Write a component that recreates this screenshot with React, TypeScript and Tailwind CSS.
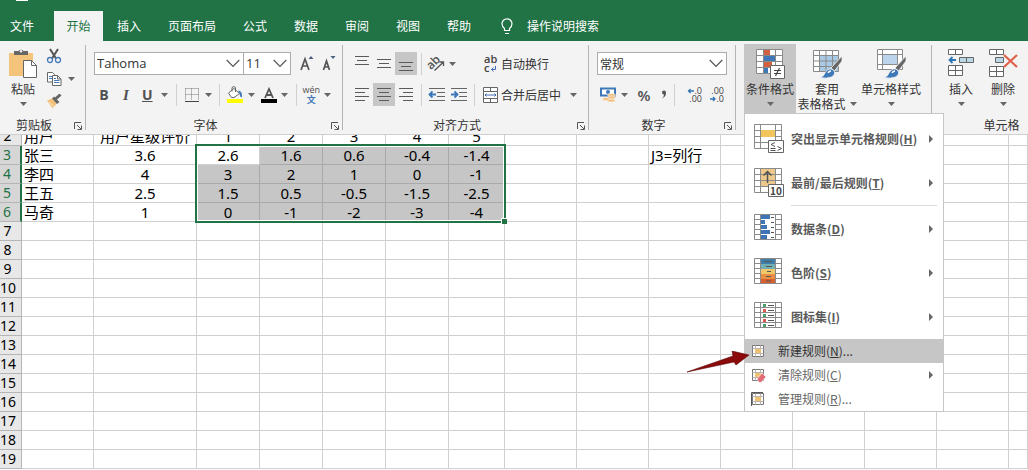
import type { ReactNode } from 'react';

const tabs = ['插入', '页面布局', '公式', '数据', '审阅', '视图', '帮助'];

const sheet: Record<number, string[]> = {
  2: ['用户', '用户星级评价', '1', '2', '3', '4', '5'],
  3: ['张三', '3.6', '2.6', '1.6', '0.6', '-0.4', '-1.4', '', '', 'J3=列行'],
  4: ['李四', '4', '3', '2', '1', '0', '-1'],
  5: ['王五', '2.5', '1.5', '0.5', '-0.5', '-1.5', '-2.5'],
  6: ['马奇', '1', '0', '-1', '-2', '-3', '-4'],
};

const rowNumbers = Array.from({ length: 18 }, (_, i) => i + 2);
const columns = [
  'w-[72px]', 'w-[103px]', 'w-[63px]', 'w-[63px]', 'w-[63px]', 'w-[63px]', 'w-[56px]',
  'w-[72px]', 'w-[72px]', 'w-[72px]', 'w-[72px]', 'w-[72px]', 'w-[72px]', 'w-[72px]', 'w-auto',
];

function Caret() {
  return (
    <svg width="7" height="4" viewBox="0 0 7 4" className="shrink-0" aria-hidden="true">
      <path d="M0 0h7L3.500 4z" fill="#666" />
    </svg>
  );
}

function Chevron() {
  return (
    <svg width="14" height="9" viewBox="0 0 14 9" className="pointer-events-none shrink-0" aria-hidden="true">
      <path d="M.7 1 7 7.500 13.300 1" fill="none" stroke="#555" strokeWidth="1.200" />
    </svg>
  );
}

function Launcher({ label }: { label: string }) {
  return (
    <button aria-label={label} className="mr-[3px] shrink-0">
      <svg width="8" height="8" viewBox="0 0 8 8" className="mt-px">
        <path d="M.5 7V.5H7M3 3l4 4M7.500 3.500v4h-4" fill="none" stroke="#555" />
      </svg>
    </button>
  );
}

function Divider() {
  return <div className="h-[22px] w-px shrink-0 bg-[#d0d0d0]" />;
}

function Tool({ label, className, children }: { label: string; className: string; children: ReactNode }) {
  return (
    <button aria-label={label} className={`flex h-[23px] shrink-0 items-center justify-center ${className}`}>
      {children}
    </button>
  );
}

function Group({ title, className, launcher, children }: { title?: string; className: string; launcher?: boolean; children: ReactNode }) {
  return (
    <section className={`flex shrink-0 ${className}`}>
      <div className="flex min-w-0 flex-1 flex-col pt-[3px]">
        <div className="h-[72px]">{children}</div>
        <div className="flex h-[18px] items-center">
          <span className={`flex-1 text-center leading-[18px] ${launcher ? 'pr-1.5' : ''}`}>{title}</span>
          {launcher && <Launcher label={`${title}设置`} />}
        </div>
      </div>
      <div className="my-1 w-px bg-[#b4b4b4]" />
    </section>
  );
}

function Lines({ rows }: { rows: [number, number, number][] }) {
  return (
    <svg width="14" height="17" viewBox="0 0 14 17" stroke="#5a5a5a">
      {rows.map(([x, y, w]) => <path key={y} d={`M${x} ${y}.5h${w}`} />)}
    </svg>
  );
}

function PasteIcon() {
  return (
    <svg width="30" height="31" viewBox="0 0 30 31">
      <path d="M1 5h24v23H1z" fill="#f5c47c" />
      <path d="M6 7V3h4.500a3 3 0 0 1 5 0H20v4z" fill="#666" />
      <circle cx="13" cy="3.200" r="1.200" fill="#f3f3f3" />
      <path d="M15.500 12.500h8l5 5v12h-13z" fill="#fff" stroke="#666" />
      <path d="M23.500 12.500v5h5" fill="none" stroke="#666" />
    </svg>
  );
}

function ScissorsIcon() {
  return (
    <svg width="16" height="16" viewBox="0 0 16 16" fill="none">
      <path d="m4 1 6 9.500M12 1 6 10.500" stroke="#555" strokeWidth="2" />
      <circle cx="4" cy="12" r="2.500" stroke="#4679b8" strokeWidth="1.300" />
      <circle cx="12" cy="12" r="2.500" stroke="#4679b8" strokeWidth="1.300" />
    </svg>
  );
}

function CopyIcon() {
  return (
    <svg width="16" height="16" viewBox="0 0 16 16" stroke="#666">
      <path d="M1.500 1.500h5l2 2v7.500h-7z" fill="#fff" />
      <path d="M3 5.500h3M3 7.500h3" stroke="#4679b8" />
      <path d="M6.500 4.500h5l3.500 3.500v6.500H6.500z" fill="#fff" />
      <path d="M11.500 4.500V8H15" fill="none" />
      <path d="M8 7.500h2M8 9.500h5.500M8 11.500h5.500" stroke="#4679b8" />
    </svg>
  );
}

function PainterIcon() {
  return (
    <svg width="16" height="15" viewBox="0 0 16 15">
      <path d="M1 6.500 6 4.500l5 5-4.500 5z" fill="#f2c078" />
      <path d="m6 4.500 2-2 5.500 5.500-2.500 2z" fill="#666" />
      <path d="m9.500 5 5-4.500" stroke="#666" strokeWidth="3" />
      <path d="m3 8 5.500 5" stroke="#fff" strokeWidth=".6" />
    </svg>
  );
}

function BucketIcon() {
  return (
    <svg width="18" height="17" viewBox="0 0 18 17">
      <path d="m2.500 7 5.500-4.500 5.500 5L8 11.500H5.500z" fill="#fff" stroke="#666" />
      <path d="M6 5.500V2a1.800 1.800 0 0 1 3.500 0v4" fill="none" stroke="#666" />
      <path d="M12 4.500q4.500 0 4 6.500-2 1-2.500-3.500z" fill="#4679b8" />
      <path d="M1 13h16v4H1z" fill="#ff0" />
    </svg>
  );
}

function OrientationIcon() {
  return (
    <svg width="17" height="17" viewBox="0 0 17 17" className="overflow-visible">
      <text x="-1" y="12" transform="rotate(-45 5 9)" fontSize="12" fontWeight="600" fill="#555" className="font-['Open_Sans',sans-serif]">ab</text>
      <path d="m6.500 15.500 8.500-8M11.500 7h4v4" fill="none" stroke="#555" strokeWidth="1.300" />
    </svg>
  );
}

function IndentIcon({ right }: { right?: boolean }) {
  return (
    <svg width="18" height="15" viewBox="0 0 18 15" fill="none">
      <path d="M1 1.500h16M9 5.500h8M9 9.500h8M1 13.500h16" stroke="#666" />
      <path d={right ? 'M1 7.500h6M4.500 4.500l3 3-3 3' : 'M8 7.500H2M4.500 4.500l-3 3 3 3'} stroke="#3a76b8" strokeWidth="1.800" />
    </svg>
  );
}

function WrapIcon() {
  return (
    <svg width="15" height="18" viewBox="0 0 15 18" className="overflow-visible font-['Open_Sans',sans-serif]" fill="#444" fontWeight="600">
      <text x="1" y="8" fontSize="11">ab</text>
      <text x="1" y="17" fontSize="11">c</text>
      <path d="M12.500 11v3.500H8.500M10.500 12.500l-2 2 2 2" fill="none" stroke="#3f68b0" />
    </svg>
  );
}

function MergeIcon() {
  return (
    <svg width="15" height="16" viewBox="0 0 15 16" fill="none">
      <path d="M.5.500h14v15H.5z" fill="#fff" stroke="#666" />
      <path d="M.5 4.500h14M.5 11.500h14M7.500.500v4M7.500 11.500v4" stroke="#666" />
      <path d="M2 8h4M9 8h4M3.500 6.500 2 8l1.500 1.500M11.500 6.500 13 8l-1.500 1.500M6 8h3" stroke="#3f68b0" />
    </svg>
  );
}

function CurrencyIcon() {
  return (
    <svg width="18" height="17" viewBox="0 0 18 17">
      <path d="M2 2.500h14v7H2z" fill="#fff" stroke="#3f78b8" strokeWidth="2" />
      <circle cx="9" cy="6" r="2" fill="#3f78b8" />
      <g fill="#f5c07c" stroke="#f3f3f3" strokeWidth=".6">
        <ellipse cx="12.500" cy="9" rx="4" ry="1.600" />
        <ellipse cx="12.500" cy="11.500" rx="4" ry="1.600" />
        <ellipse cx="12" cy="14.500" rx="4" ry="1.600" />
        <ellipse cx="7" cy="13" rx="3.500" ry="1.500" />
      </g>
    </svg>
  );
}

function DecimalIcon({ less }: { less?: boolean }) {
  return (
    <svg width="16" height="16" viewBox="0 0 16 16" className="overflow-visible font-['Open_Sans',sans-serif]" fill="#444" fontSize="9" textAnchor="end">
      <text x="15" y="7">{less ? '.00' : '.0'}</text>
      <text x="15" y="15">{less ? '.0' : '.00'}</text>
      <path d={less ? 'M1 12h5M4 10l2 2-2 2' : 'M7 4H1.500M3.500 2l-2 2 2 2'} fill="none" stroke="#2f75b5" strokeWidth="1.300" />
    </svg>
  );
}

function ConditionalIcon() {
  return (
    <svg width="30" height="31" viewBox="0 0 30 31">
      <path d="M1.500 1.500h26v24h-26z" fill="#fff" />
      <path d="M9 1.500h6v6H9z" fill="#d2613f" />
      <path d="M9 8h11v5H9z" fill="#3f78b8" />
      <path d="M9 14h8v5H9z" fill="#d2613f" />
      <path d="M9 20h4v5.500H9z" fill="#3f78b8" />
      <path d="M1.500 1.500h26v24h-26zM1.500 7.500h26M1.500 13.500h26M1.500 19.500h26M8.500 1.500v24M20.500 1.500v24" fill="none" stroke="#8a8a8a" />
      <path d="M15.500 17.500h14v13h-14z" fill="#fff" stroke="#666" />
      <path d="M19 22.500h7M19 25.500h7M24.500 20l-4 8" stroke="#444" strokeWidth="1.200" />
    </svg>
  );
}

function BrushTableIcon({ plain }: { plain?: boolean }) {
  return (
    <svg width="31" height="31" viewBox="0 0 31 31">
      <path d={plain ? 'M1.500 1.500h25v20h-25z' : 'M1.500 2.500h25v21h-25z'} fill="#fff" />
      <path d={plain ? 'M7 6.500h14v10H7z' : 'M7.500 8h19v15.500h-19z'} fill={plain ? '#bcd4ec' : '#a9c9e4'} />
      <path
        d={plain
          ? 'M1.500 1.500h25v20h-25zM1.500 6.500h25M1.500 16.500h25M6.500 1.500v20M21.500 1.500v20'
          : 'M1.500 2.500h25v21h-25zM1.500 7.500h25M1.500 13h25M1.500 18.500h25M7.500 2.500v21M14 2.500v21M20.500 2.500v21'}
        fill="none"
        stroke="#8a8a8a"
      />
      <path d="M30 8 19 20l3.500 3L30 13z" fill="#666" stroke="#f3f3f3" strokeWidth=".8" />
      <path d="M8 29.500q4-1 5.500-5.500 3.500-5 8-2 3 4-2 7-5 2-11.500.500z" fill="#3f78b8" stroke="#f3f3f3" strokeWidth=".8" />
      <path d="M16 25q1-2 3-2" stroke="#fff" strokeWidth="1.500" fill="none" />
    </svg>
  );
}

function InsertCellIcon() {
  return (
    <svg width="28" height="31" viewBox="0 0 28 31" stroke="#666">
      <path d="M1.500 1.500h14v5h-14zM8.500 1.500v5M1.500 17.500h14v10h-14zM8.500 17.500v10M1.500 22.500h14" fill="#fff" />
      <path d="M12.500 9.500h14v5h-14zM19.500 9.500v5" fill="#bcd8e6" />
      <path d="M9 12H3M5.500 9 2.500 12l3 3" fill="none" stroke="#2f75b5" strokeWidth="1.800" />
    </svg>
  );
}

function DeleteCellIcon() {
  return (
    <svg width="30" height="31" viewBox="0 0 30 31" stroke="#666">
      <path d="M1.500 1.500h14v5h-14zM8.500 1.500v5M1.500 18.500h14v10h-14zM8.500 18.500v10M1.500 23.500h14" fill="#fff" />
      <path d="M7.500 9.500h8v5h-8z" fill="#bcd8e6" />
      <path d="m16 7 13 12M29 7 16 19" stroke="#e0604a" strokeWidth="2.200" />
    </svg>
  );
}

// 28px table glyphs used by the large menu entries
function RuleIcon({ kind }: { kind: string }) {
  return (
    <svg width="30" height="30" viewBox="0 0 30 30" className="shrink-0">
      <path d="M.5.500h27v25H.5z" fill="#fff" />
      {kind === 'top' && <path d="M7 1h14v18H7z" fill="#ecc88a" />}
      <path
        d={kind === 'highlight' || kind === 'top'
          ? 'M.5.500h27v24H.5zM.5 6.500h27M.5 12.500h27M.5 18.500h27M6.500.500v24M21.500.500v24'
          : 'M.5.500h27v25H.5zM.5 5.500h27M.5 10.500h27M.5 15.500h27M.5 20.500h27M6.500.500v25M21.500.500v25'}
        fill="none"
        stroke="#8a8a8a"
      />
      {kind === 'highlight' && (
        <>
          <path d="M7 6h14v7H7z" fill="#f2c55c" />
          <path d="M14.500 16.500h15v12h-15z" fill="#fff" stroke="#666" />
          <path d="m21 18.500-4 2 4 2M16.500 24.500h5M16.500 26.500h5M23.500 22.500l4 2-4 2" fill="none" stroke="#555" />
        </>
      )}
      {kind === 'top' && (
        <>
          <path d="M13.500 15V4M9.500 7.500l4-4 4 4" fill="none" stroke="#555" strokeWidth="1.500" />
          <path d="M14.500 16.500h15v12h-15z" fill="#fff" stroke="#666" />
          <text x="22" y="26.500" fontSize="10" textAnchor="middle" fill="#444">10</text>
        </>
      )}
      {kind === 'bars' && (
        <>
          <path d="M7 1h14v24H7z" fill="#fff" />
          <path d="M7 1h9v4H7zM7 6h4v4H7zM7 11h6v4H7zM7 16h9v4H7zM7 21h6v4H7z" fill="#3f74b5" />
          <path d="M17 3.500h3M17 8.500h3M17 13.500h3M17 18.500h3M17 23.500h3" stroke="#555" />
        </>
      )}
      {kind === 'scale' && (
        <>
          <path d="M7 1h14v5H7z" fill="#3f7ea8" />
          <path d="M7 6h14v5H7z" fill="#73aeb4" />
          <path d="M7 11h14v5H7z" fill="#f0c869" />
          <path d="M7 16h14v5H7z" fill="#e88e45" />
          <path d="M7 21h14v4H7z" fill="#d8602f" />
          <path d="M10 3.500h8M12 8.500h6M13 13.500h4M12 18.500h5M12 23h5" stroke="#555" />
        </>
      )}
      {kind === 'icons' && (
        <>
          <path d="M7 1h14v4H7zM7 6h14v4H7zM7 11h14v4H7zM7 16h14v4H7zM7 21h14v4H7z" fill="#fff" />
          <path d="M14 3.500h6M14 8.500h6M14 13.500h6M14 18.500h6M14 23.500h6" stroke="#555" />
          <path d="M9 2h3v3H9zM9 12h3v3H9zM9 22h3v3H9z" fill="#4ba06c" />
          <path d="M9 7h3v3H9zM9 17h3v3H9z" fill="#dd5a50" />
        </>
      )}
    </svg>
  );
}

function SmallRuleIcon({ kind }: { kind: string }) {
  return (
    <svg width="15" height="15" viewBox="0 0 15 15" className="shrink-0">
      <path d="M1.500 1.500h11v11h-11z" fill="#fff" stroke="#777" />
      <path d="M1.500 4.500h11M1.500 9.500h11M4.500 1.500v11M9.500 1.500v11" stroke="#b5b5b5" />
      <path d="M4 5h6v4H4z" fill="#f2c070" />
      {kind === 'clear' && <path d="m6 11 5-6 4 4-5 5.500H8z" fill="#e36d76" stroke="#fff" strokeWidth=".6" />}
      {kind === 'manage' && <path d="M.5 14V.500H12" fill="none" stroke="#555" />}
    </svg>
  );
}

const ruleGroups = [
  [
    { kind: 'highlight', text: '突出显示单元格规则', accel: 'H' },
    { kind: 'top', text: '最前/最后规则', accel: 'T' },
  ],
  [
    { kind: 'bars', text: '数据条', accel: 'D' },
    { kind: 'scale', text: '色阶', accel: 'S' },
    { kind: 'icons', text: '图标集', accel: 'I' },
  ],
];

const ruleCommands = [
  { kind: 'new', text: '新建规则', accel: 'N', tail: '...', active: true },
  { kind: 'clear', text: '清除规则', accel: 'C', tail: '', active: false },
  { kind: 'manage', text: '管理规则', accel: 'R', tail: '...', active: false },
];

function SubmenuArrow() {
  return (
    <svg width="4" height="8" viewBox="0 0 4 8" className="ml-auto shrink-0">
      <path d="M0 0v8l4-4z" fill="#666" />
    </svg>
  );
}

function RulesMenu() {
  return (
    <div role="menu" className="absolute top-full left-0 z-10 w-[200px] border border-[#c6c6c6] bg-white pt-[3px] text-left">
      {ruleGroups.map((group, i) => (
        <div key={i}>
          {i > 0 && <div className="mr-1.5 mb-px ml-[46px] h-px bg-[#dcdcdc]" />}
          {group.map((item) => (
            <button key={item.kind} role="menuitem" className="flex h-11 w-full items-center gap-[7px] pr-2.5 pl-[9px] font-bold text-[#5a5a5a]">
              <RuleIcon kind={item.kind} />
              <span className="whitespace-nowrap">{item.text}(<u>{item.accel}</u>)</span>
              <SubmenuArrow />
            </button>
          ))}
        </div>
      ))}
      {ruleCommands.map((item) => (
        <button
          key={item.kind}
          role="menuitem"
          className={`flex h-6 w-full items-center gap-3 pr-2.5 pl-1.5 ${item.active ? 'bg-[#c6c6c6] text-[#333]' : 'text-[#666]'}`}
        >
          <SmallRuleIcon kind={item.kind} />
          <span>{item.text}(<u>{item.accel}</u>){item.tail}</span>
          {item.kind === 'clear' && <SubmenuArrow />}
        </button>
      ))}
      {/* pointer to the new-rule command */}
      <svg width="64" height="24" viewBox="0 0 64 24" className="pointer-events-none absolute right-[192px] bottom-9">
        <path d="M0 21 46 5 45 0 62 4 49 14 47 11z" fill="#8b0a0a" stroke="#5c0808" strokeWidth=".6" />
      </svg>
    </div>
  );
}

function BigButton({ icon, lines, className }: { icon: ReactNode; lines: string[]; className: string }) {
  return (
    <button className={`flex h-[69px] shrink-0 flex-col items-center pt-1 ${className}`}>
      {icon}
      <span className="mt-0.5 leading-[15px] whitespace-nowrap">{lines[0]}</span>
      <span className="flex h-[15px] items-center gap-1 leading-[15px] whitespace-nowrap">
        {lines[1]}
        <Caret />
      </span>
    </button>
  );
}

function Ribbon() {
  return (
    <div className="flex overflow-x-clip border-b border-[#cfcfcf] bg-[#f3f3f3] text-[#333]">
      <Group title="剪贴板" className="w-[86px]" launcher>
        <div className="flex gap-[3px]">
          <BigButton icon={<PasteIcon />} lines={['粘贴']} className="ml-[3px] w-10" />
          <div className="flex flex-col">
            <Tool label="剪切" className="w-4"><ScissorsIcon /></Tool>
            <Tool label="复制" className="gap-1.5"><CopyIcon /><Caret /></Tool>
            <Tool label="格式刷" className="w-4"><PainterIcon /></Tool>
          </div>
        </div>
      </Group>

      <Group title="字体" className="w-[257px]" launcher>
        <div className="flex flex-col gap-2 pt-2 pl-2">
          <div className="flex items-center">
            <div className="flex h-[23px] w-[150px] items-center border border-[#ababab] bg-white pr-[3px]">
              <select aria-label="字体名称" className="h-[21px] min-w-0 flex-1 appearance-none pl-0.5 font-['Open_Sans',sans-serif] text-[13px] leading-[21px]">
                <option>Tahoma</option>
              </select>
              <Chevron />
            </div>
            <div className="flex h-[23px] w-[47px] items-center border border-l-0 border-[#ababab] bg-white pr-[3px]">
              <select aria-label="字号" className="h-[21px] min-w-0 flex-1 appearance-none pl-0.5 font-['Open_Sans',sans-serif] text-[13px] leading-[21px]">
                <option>11</option>
              </select>
              <Chevron />
            </div>
            <Tool label="增大字号" className="ml-1.5 w-5">
              <svg width="14" height="16" viewBox="0 0 14 16">
                <path d="m1 14 4-11 4 11M2.500 10h5" fill="none" stroke="#555" strokeWidth="1.700" />
                <path d="M8.500 3 11 0l2.500 3z" fill="#4a5f80" />
              </svg>
            </Tool>
            <Tool label="减小字号" className="ml-0.5 w-5">
              <svg width="14" height="16" viewBox="0 0 14 16">
                <path d="m1.500 14 3-9 3 9M2.500 11h4" fill="none" stroke="#555" strokeWidth="1.700" />
                <path d="M8.500 0h5L11 3z" fill="#4a5f80" />
              </svg>
            </Tool>
          </div>
          <div className="flex items-center font-['Open_Sans',sans-serif] text-[14px] text-[#505050]">
            <Tool label="加粗" className="w-5 font-bold">B</Tool>
            <Tool label="倾斜" className="ml-0.5 w-5 font-['Liberation_Serif',serif] text-[15px] font-bold italic">I</Tool>
            <Tool label="下划线" className="ml-0.5 gap-2 pl-1 font-bold"><u>U</u><Caret /></Tool>
            <div className="ml-2"><Divider /></div>
            <Tool label="边框" className="ml-2 gap-1.5">
              <svg width="14" height="14" viewBox="0 0 14 14" fill="none">
                <path d="M.5.500h13M.5 6.500h13M.5.500v12M6.500.500v12M13.500.500v12" stroke="#777" strokeDasharray="1 1" />
                <path d="M0 13.500h14" stroke="#444" />
              </svg>
              <Caret />
            </Tool>
            <div className="ml-[7px]"><Divider /></div>
            <Tool label="填充颜色" className="ml-1.5 gap-1"><BucketIcon /><Caret /></Tool>
            <Tool label="字体颜色" className="ml-1.5 gap-1">
              <svg width="16" height="16" viewBox="0 0 16 16">
                <path d="m4 11 4-9 4 9M5.500 8h5" fill="none" stroke="#555" strokeWidth="1.800" />
                <path d="M0 12h16v4H0z" />
              </svg>
              <Caret />
            </Tool>
            <div className="ml-2"><Divider /></div>
            <Tool label="拼音指南" className="ml-1.5 gap-1">
              <span className="flex flex-col items-center text-[9px] leading-[11px]">
                wén
                <span className="font-['Noto_Sans_CJK_SC',sans-serif] text-[9px] leading-[10px] font-bold text-[#3f78b8]">文</span>
              </span>
              <Caret />
            </Tool>
          </div>
        </div>
      </Group>

      <Group title="对齐方式" className="w-[246px]" launcher>
        <div className="flex gap-4 pt-2 pl-2">
          <div className="flex flex-col gap-2">
            <div className="flex items-center">
              <Tool label="顶端对齐" className="w-[22px]"><Lines rows={[[0, 1, 14], [2, 5, 10], [0, 9, 14]]} /></Tool>
              <Tool label="垂直居中" className="w-[22px]"><Lines rows={[[0, 4, 14], [2, 8, 10], [0, 12, 14]]} /></Tool>
              <Tool label="底端对齐" className="w-[22px] bg-[#c6c6c6]"><Lines rows={[[0, 7, 14], [2, 11, 10], [0, 15, 14]]} /></Tool>
              <div className="ml-1"><Divider /></div>
              <Tool label="方向" className="ml-1.5 gap-1"><OrientationIcon /><Caret /></Tool>
            </div>
            <div className="flex items-center">
              <Tool label="左对齐" className="w-[22px]"><Lines rows={[[0, 2, 14], [0, 6, 10], [0, 10, 14], [0, 14, 10]]} /></Tool>
              <Tool label="居中" className="w-[22px] bg-[#c6c6c6]"><Lines rows={[[0, 2, 14], [2, 6, 10], [0, 10, 14], [2, 14, 10]]} /></Tool>
              <Tool label="右对齐" className="w-[22px]"><Lines rows={[[0, 2, 14], [4, 6, 10], [0, 10, 14], [4, 14, 10]]} /></Tool>
              <div className="ml-1"><Divider /></div>
              <Tool label="减少缩进量" className="ml-1.5"><IndentIcon /></Tool>
              <Tool label="增加缩进量" className="ml-1"><IndentIcon right /></Tool>
              <div className="-mr-2 ml-1.5"><Divider /></div>
            </div>
          </div>
          <div className="flex flex-col gap-2 whitespace-nowrap">
            <button className="flex h-[23px] items-center gap-[3px]"><WrapIcon />自动换行</button>
            <button className="flex h-[23px] items-center gap-[3px]">
              <MergeIcon />合并后居中
              <span className="ml-1.5"><Caret /></span>
            </button>
          </div>
        </div>
      </Group>

      <Group title="数字" className="w-[147px]" launcher>
        <div className="flex flex-col gap-2 px-2 pt-2">
          <div className="flex h-[23px] items-center border border-[#ababab] bg-white pr-[3px]">
            <select aria-label="数字格式" className="h-[21px] min-w-0 flex-1 appearance-none pl-0.5 leading-[21px]">
              <option>常规</option>
            </select>
            <Chevron />
          </div>
          <div className="flex items-center font-['Open_Sans',sans-serif] text-[#505050]">
            <Tool label="会计数字格式" className="ml-0.5 gap-1"><CurrencyIcon /><Caret /></Tool>
            <Tool label="百分比样式" className="ml-1.5 w-5 text-[15px] font-semibold">%</Tool>
            <Tool label="千位分隔样式" className="w-5">
              <svg width="6" height="9" viewBox="0 0 6 9"><path d="M1 2.500a2 2 0 1 1 4 0Q5 7 1 8.500 3 6.500 3 4.500 1 4.500 1 2.500z" fill="#555" /></svg>
            </Tool>
            <div><Divider /></div>
            <Tool label="增加小数位数" className="ml-3"><DecimalIcon /></Tool>
            <Tool label="减少小数位数" className="ml-1.5"><DecimalIcon less /></Tool>
          </div>
        </div>
      </Group>

      <Group className="w-[196px]">
        <div className="flex pl-2">
          <div className="relative">
            <BigButton icon={<ConditionalIcon />} lines={['条件格式']} className="w-[52px] bg-[#c6c6c6]" />
            <RulesMenu />
          </div>
          <BigButton icon={<BrushTableIcon />} lines={['套用', '表格格式']} className="w-[62px]" />
          <BigButton icon={<BrushTableIcon plain />} lines={['单元格样式']} className="w-[66px]" />
        </div>
      </Group>

      <Group title="单元格" className="w-[140px]">
        <div className="flex pl-2">
          <BigButton icon={<InsertCellIcon />} lines={['插入']} className="w-[42px]" />
          <BigButton icon={<DeleteCellIcon />} lines={['删除']} className="w-[42px]" />
        </div>
      </Group>
    </div>
  );
}

function Sheet() {
  return (
    <div className="overflow-hidden bg-white">
      <table className="-mt-2 w-full table-fixed border-separate border-spacing-0 font-['Noto_Sans','Noto_Sans_CJK_SC',sans-serif] text-[15px] leading-[18px] text-black">
        <colgroup>
          <col className="w-[22px]" />
          {columns.map((width, i) => <col key={i} className={width} />)}
        </colgroup>
        <tbody>
          {rowNumbers.map((row) => {
            const picked = row >= 3 && row <= 6;
            return (
              <tr key={row} className="h-[19px]">
                <th
                  scope="row"
                  className={`h-[19px] border-b border-b-[#b5b5b5] p-0 pr-1.5 text-center text-[14px] font-normal ${
                    picked ? 'border-r-2 border-r-[#217346] bg-[#d6d6d6] text-[#217346]' : 'border-r border-r-[#b5b5b5] bg-[#e8e8e8]'
                  }`}
                >
                  {row}
                </th>
                {columns.map((_, col) => {
                  const inRange = picked && col >= 2 && col <= 6;
                  const first = row === 3 && col === 2;
                  return (
                    <td
                      key={col}
                      className={`h-[19px] border-r border-b p-0 whitespace-nowrap ${first ? 'relative' : ''} ${
                        col > 0 && col < 7 ? 'text-center' : 'pl-0.5'
                      } ${inRange && !first ? 'border-[#a9a9a9] bg-[#c6c6c6]' : 'border-[#d0d0d0]'}`}
                    >
                      {sheet[row]?.[col]}
                      {first && (
                        <div className="pointer-events-none absolute -top-0.5 -left-0.5 h-[79px] w-[311px] border-2 border-[#217346] shadow-[inset_0_0_0_1px_#fff]">
                          <div className="absolute -right-[3px] -bottom-[3px] size-[6px] border-t border-l border-white bg-[#217346]" />
                        </div>
                      )}
                    </td>
                  );
                })}
              </tr>
            );
          })}
        </tbody>
      </table>
    </div>
  );
}

export default function App() {
  return (
    <div className="overflow-hidden font-['Noto_Sans_CJK_SC','Noto_Sans',sans-serif] text-[12px] leading-4">
      <header className="bg-[#217346] text-white">
        <div className="h-[11px] pl-4"><div className="h-px w-3 bg-white" /></div>
        <nav className="flex h-[30px] items-stretch gap-px whitespace-nowrap">
          <button className="w-[53px] pl-2.5 text-left">文件</button>
          <button className="w-[49px] bg-[#f3f3f3] text-[#217346]">开始</button>
          {tabs.map((tab) => <button key={tab} className="px-[13px]">{tab}</button>)}
          <button className="ml-4 flex items-center gap-3.5">
            <svg width="12" height="17" viewBox="0 0 12 17" fill="none" stroke="#fff" strokeWidth="1.200">
              <path d="M3.500 12.500v-2Q1 8.500 1 5.800a5 5 0 0 1 10 0q0 2.700-2.500 4.700v2zM4 15.500h4" />
            </svg>
            操作说明搜索
          </button>
        </nav>
      </header>
      <Ribbon />
      <Sheet />
    </div>
  );
}
